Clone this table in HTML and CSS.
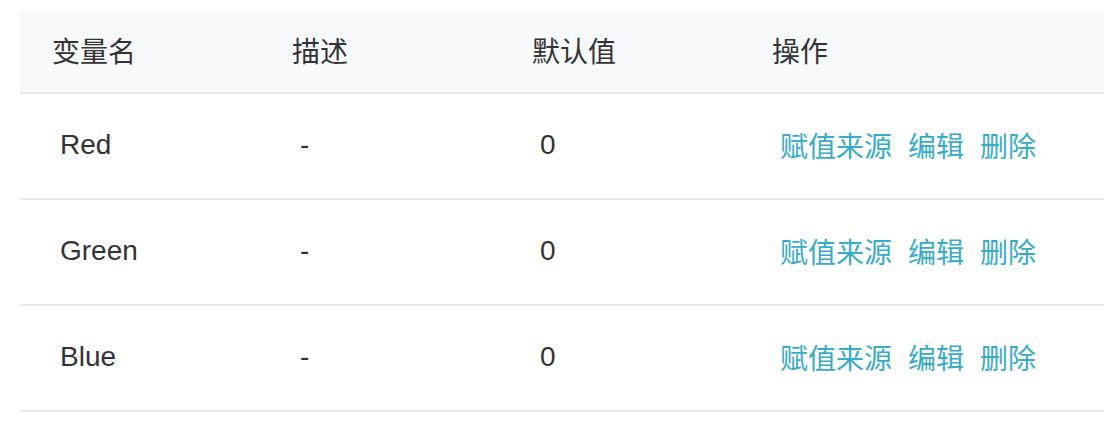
FILE: index.html
```html
<!DOCTYPE html>
<html lang="zh">
<head>
<meta charset="utf-8">
<title>变量</title>
<link rel="stylesheet" href="styles.css">
</head>
<body>
<div class="table">
  <div class="row head">
    <div class="cell">变量名</div>
    <div class="cell">描述</div>
    <div class="cell">默认值</div>
    <div class="cell">操作</div>
  </div>
  <div class="row body">
    <div class="cell">Red</div>
    <div class="cell">-</div>
    <div class="cell">0</div>
    <div class="cell ops"><a class="link">赋值来源</a><a class="link">编辑</a><a class="link">删除</a></div>
  </div>
  <div class="row body">
    <div class="cell">Green</div>
    <div class="cell">-</div>
    <div class="cell">0</div>
    <div class="cell ops"><a class="link">赋值来源</a><a class="link">编辑</a><a class="link">删除</a></div>
  </div>
  <div class="row body">
    <div class="cell">Blue</div>
    <div class="cell">-</div>
    <div class="cell">0</div>
    <div class="cell ops"><a class="link">赋值来源</a><a class="link">编辑</a><a class="link">删除</a></div>
  </div>
</div>
</body>
</html>
```
FILE: styles.css
```css
html, body {
  margin: 0;
  padding: 0;
  background: #ffffff;
}
body {
  padding: 10px 16px 0 20px;
  font-family: "Liberation Sans", "Noto Sans CJK SC", sans-serif;
  font-size: 28px;
  color: #333333;
}
.table {
  width: 1084px;
}
.row {
  display: grid;
  grid-template-columns: 240px 240px 240px 1fr;
  align-items: center;
  border-bottom: 2px solid #e8e8e8;
}
.head {
  height: 82px;
  background: #f8f9fb;
}
.head .cell {
  padding-left: 32px;
  padding-bottom: 3px;
  color: #333333;
}
.body {
  height: 104px;
}
.body .cell {
  padding-left: 40px;
  padding-bottom: 2px;
}
.ops {
  display: flex;
  gap: 16px;
}
.link {
  color: #38abcb;
  text-decoration: none;
}
```
